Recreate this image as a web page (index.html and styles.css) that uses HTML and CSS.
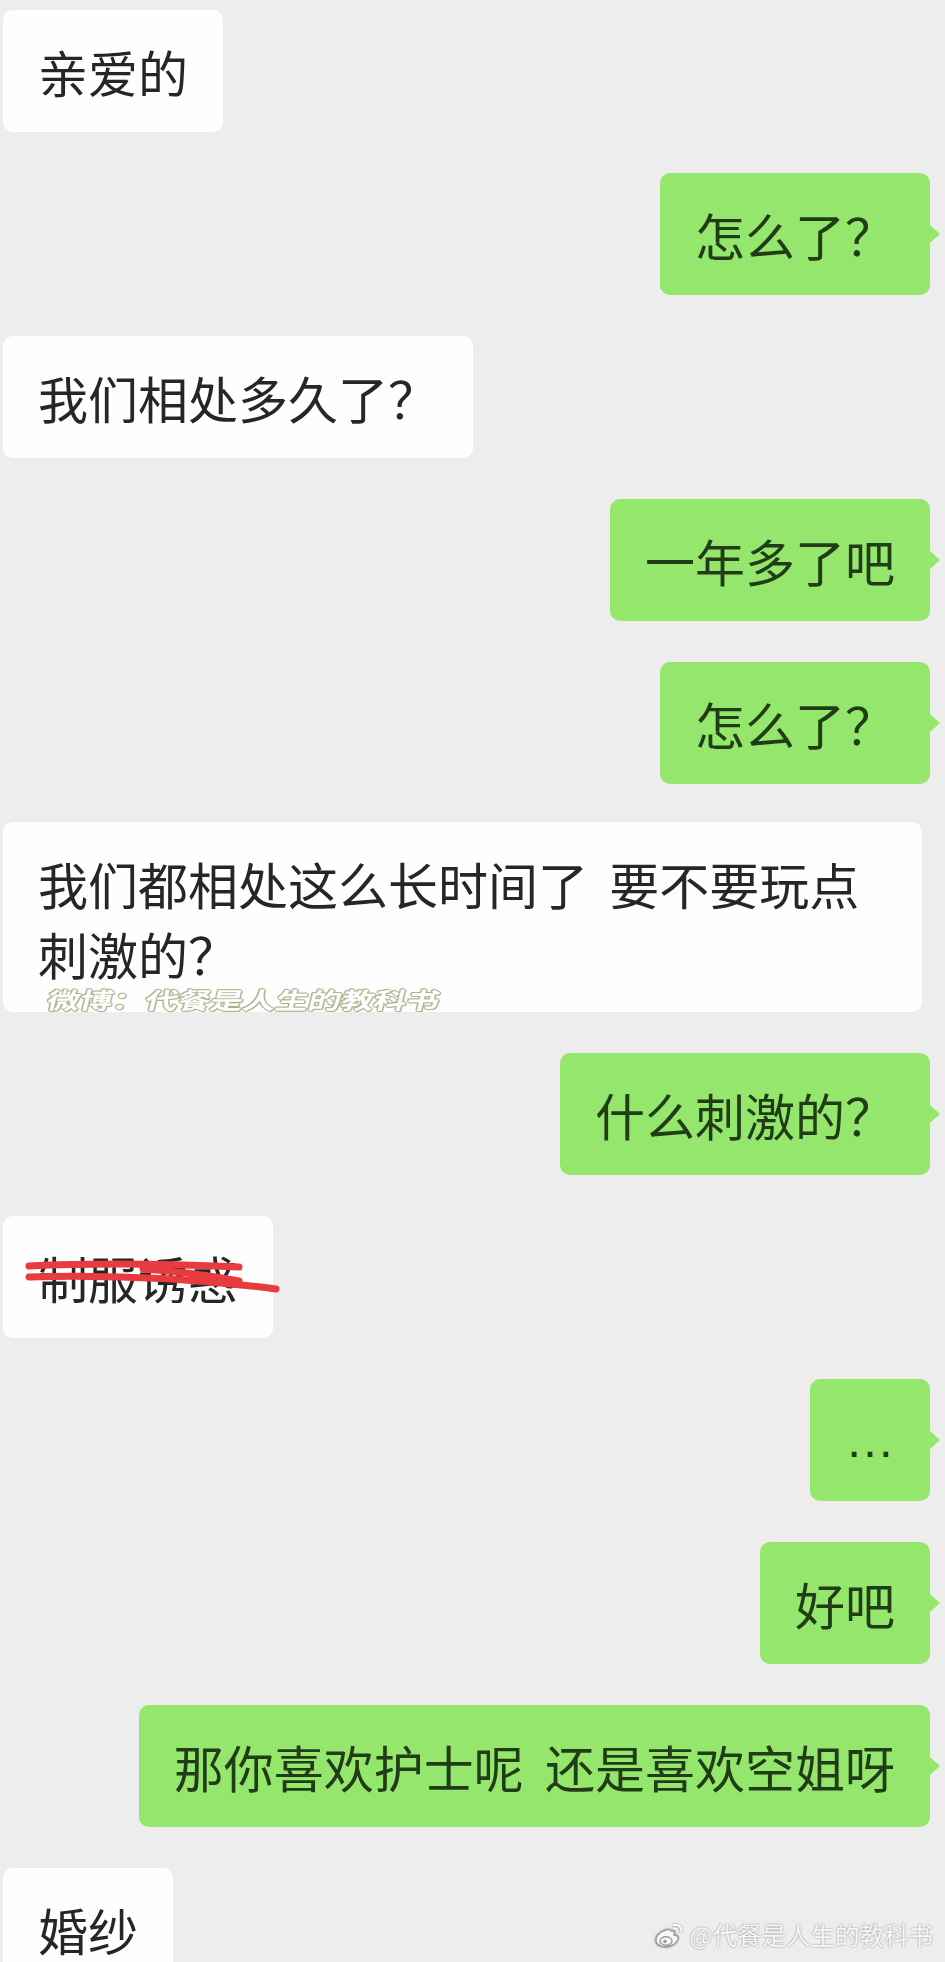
FILE: index.html
```html
<!DOCTYPE html>
<html lang="zh-CN">

<head>
    <meta charset="UTF-8">
    <meta name="viewport" content="width=device-width, initial-scale=1.0">
    <title>聊天记录</title>
    <link rel="stylesheet" href="styles.css">
</head>

<body>
    <div class="chat">
        <div class="row left">
            <div class="bubble">亲爱的</div>
        </div>
        <div class="row right">
            <div class="bubble">怎么了？</div>
        </div>
        <div class="row left">
            <div class="bubble">我们相处多久了？</div>
        </div>
        <div class="row right">
            <div class="bubble">一年多了吧</div>
        </div>
        <div class="row right">
            <div class="bubble">怎么了？</div>
        </div>
        <div class="row left">
            <div class="bubble wide">
                我们都相处这么长时间了 要不要玩点刺激的？
                <span class="mark">微博：代餐是人生的教科书</span>
            </div>
        </div>
        <div class="row right">
            <div class="bubble">什么刺激的？</div>
        </div>
        <div class="row left">
            <div class="bubble crossed">
                制服诱惑
                <svg class="scribble" width="290" height="100" viewBox="0 0 290 100">
                    <path d="M26 50 C90 47 170 48 236 51" />
                    <path d="M26 61 C100 59 180 61 273 73" />
                    <path d="M140 53 C180 56 210 60 236 65" />
                </svg>
            </div>
        </div>
        <div class="row right">
            <div class="bubble dots">…</div>
        </div>
        <div class="row right">
            <div class="bubble">好吧</div>
        </div>
        <div class="row right">
            <div class="bubble">那你喜欢护士呢 还是喜欢空姐呀</div>
        </div>
        <div class="row left">
            <div class="bubble">婚纱</div>
        </div>

        <div class="weibo">
            <svg width="32" height="28" viewBox="0 0 32 28">
                <path class="logo-body" d="M13 9 C6 11 2 16 3 20 C4 25 11 27 17 25 C23 23 26 19 25 16 C24 14 22 14 21 14 C22 11 21 9 18 10 C17 8 15 8 13 9 Z" />
                <ellipse class="logo-eye" cx="13" cy="20" rx="6" ry="4.2" />
                <circle class="logo-dot" cx="12" cy="20.5" r="1.8" />
                <path class="logo-wave" d="M21 4 C25 3 29 6 28 10" />
                <path class="logo-wave" d="M21 7.5 C23.5 7 25 8.5 24.6 10.5" />
            </svg>
            <span>@代餐是人生的教科书</span>
        </div>
    </div>
</body>

</html>
```

FILE: styles.css
```css
body {
    margin: 0;
    background-color: #ededed;
    font-family: "Noto Sans CJK SC", "Noto Sans", sans-serif;
}

.chat {
    position: relative;
    height: 1962px;
    overflow: hidden;
    display: flex;
    flex-direction: column;
    gap: 41px;
    padding: 10px 15px 0 3px;
    box-sizing: border-box;
}

.row {
    display: flex;
}

.row.left {
    justify-content: flex-start;
}

.row.right {
    justify-content: flex-end;
}

.bubble {
    position: relative;
    max-width: 919px;
    box-sizing: border-box;
    padding: 26px 35px;
    border-radius: 10px;
    font-size: 50px;
    line-height: 70px;
    word-spacing: 10px;
    color: #262626;
    background-color: #fefefe;
}

.right .bubble {
    background-color: #95e66c;
    color: #213d17;
}

.right .bubble::after {
    content: "";
    position: absolute;
    right: -10px;
    top: 50%;
    margin-top: -9px;
    border-top: 9px solid transparent;
    border-bottom: 9px solid transparent;
    border-left: 10px solid #95e66c;
}

.bubble.wide {
    width: 919px;
    margin-top: -3px;
    padding-bottom: 24px;
}

.bubble.dots {
    height: 122px;
    font-family: "Liberation Sans", sans-serif;
}

/* watermark printed into the screenshot */
.mark {
    position: absolute;
    left: 42px;
    bottom: 1px;
    font-size: 23px;
    line-height: 23px;
    font-weight: bold;
    color: #ffffff;
    word-spacing: 0;
    white-space: nowrap;
    transform-origin: left bottom;
    transform: skewX(-14deg) scaleX(1.42);
    text-shadow: 1px 0 0 #aeb38f, -1px 0 0 #aeb38f, 0 1px 0 #aeb38f, 0 -1px 0 #aeb38f, 1px 1px 0 #aeb38f, -1px -1px 0 #aeb38f;
}

.scribble {
    position: absolute;
    left: 0;
    top: 0;
    overflow: visible;
}

.scribble path {
    fill: none;
    stroke: #e73b3f;
    stroke-width: 7;
    stroke-linecap: round;
}

.weibo {
    position: absolute;
    right: 12px;
    bottom: 12px;
    display: flex;
    align-items: center;
    gap: 4px;
    font-size: 24.5px;
    line-height: 30px;
    color: #f7f7f7;
    text-shadow: 0 0 2px rgba(0, 0, 0, 0.45);
}

.weibo svg {
    filter: drop-shadow(0 0 1px rgba(0, 0, 0, 0.4));
}

.logo-body,
.logo-eye {
    fill: #f7f7f7;
    stroke: #9a9a9a;
    stroke-width: 1.4;
}

.logo-dot {
    fill: #9a9a9a;
}

.logo-wave {
    fill: none;
    stroke: #f7f7f7;
    stroke-width: 2.2;
    stroke-linecap: round;
}
```
